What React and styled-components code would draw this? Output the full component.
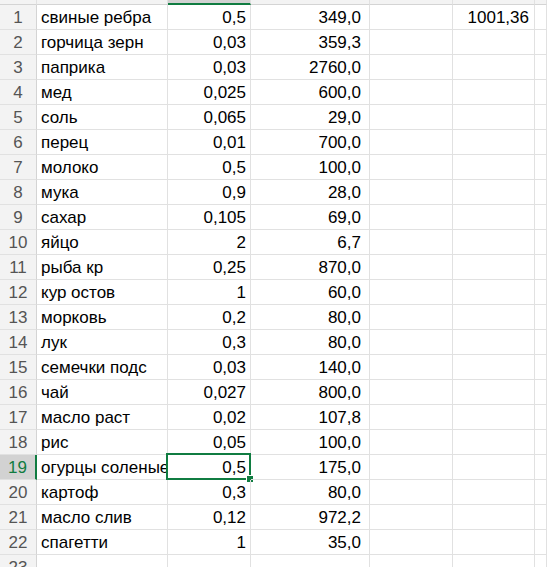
import React from "react";
import styled, { createGlobalStyle } from "styled-components";

const GREEN = "#107c41";
const LINE = "#e1e1e1";

const GlobalStyle = createGlobalStyle`
  html, body {
    margin: 0;
    padding: 0;
    background: #ffffff;
    overflow: hidden;
  }
  body {
    font-family: "Liberation Sans", Arial, sans-serif;
  }
`;

const Sheet = styled.div`
  width: 547px;
  height: 567px;
  overflow: hidden;
  display: grid;
  grid-template-columns: 37px 131px 83px 119px 83px 82px 1fr;
  grid-auto-rows: 25px;
  grid-template-rows: 5px;
`;

const ColHead = styled.div`
  box-sizing: border-box;
  background: ${({ $active }) => ($active ? "#d2d2d2" : "#f3f3f3")};
  border-right: 1px solid ${LINE};
  border-bottom: ${({ $active }) => ($active ? `2px solid ${GREEN}` : "1px solid #d4d4d4")};
`;

const RowHead = styled.div`
  box-sizing: border-box;
  display: flex;
  align-items: center;
  justify-content: center;
  background: ${({ $active }) => ($active ? "#d2d2d2" : "#f3f3f3")};
  color: ${({ $active }) => ($active ? GREEN : "#555555")};
  border-bottom: 1px solid ${LINE};
  border-right: ${({ $active }) => ($active ? `2px solid ${GREEN}` : "1px solid #d4d4d4")};
  font-size: 17px;
  padding-top: 1px;
`;

const Cell = styled.div`
  position: relative;
  box-sizing: border-box;
  display: flex;
  align-items: center;
  justify-content: ${({ $num }) => ($num ? "flex-end" : "flex-start")};
  padding: 1px ${({ $pr }) => $pr || 4}px 0 4px;
  border-right: 1px solid ${LINE};
  border-bottom: 1px solid ${LINE};
  font-size: 17px;
  color: #000000;
  white-space: nowrap;
  overflow: ${({ $selected }) => ($selected ? "visible" : "hidden")};
`;

const Selection = styled.div`
  position: absolute;
  top: -2px;
  left: -2px;
  right: -1px;
  bottom: -1px;
  border: 2px solid ${GREEN};
  pointer-events: none;
`;

const FillHandle = styled.div`
  position: absolute;
  right: -5px;
  bottom: -5px;
  width: 6px;
  height: 6px;
  background: ${GREEN};
  border: 1px solid #ffffff;
`;

const rows = [
  ["свиные ребра", "0,5", "349,0", "", "1001,36"],
  ["горчица зерн", "0,03", "359,3"],
  ["паприка", "0,03", "2760,0"],
  ["мед", "0,025", "600,0"],
  ["соль", "0,065", "29,0"],
  ["перец", "0,01", "700,0"],
  ["молоко", "0,5", "100,0"],
  ["мука", "0,9", "28,0"],
  ["сахар", "0,105", "69,0"],
  ["яйцо", "2", "6,7"],
  ["рыба кр", "0,25", "870,0"],
  ["кур остов", "1", "60,0"],
  ["морковь", "0,2", "80,0"],
  ["лук", "0,3", "80,0"],
  ["семечки подс", "0,03", "140,0"],
  ["чай", "0,027", "800,0"],
  ["масло раст", "0,02", "107,8"],
  ["рис", "0,05", "100,0"],
  ["огурцы соленые", "0,5", "175,0"],
  ["картоф", "0,3", "80,0"],
  ["масло слив", "0,12", "972,2"],
  ["спагетти", "1", "35,0"],
  [],
];

const SEL_ROW = 18;

export default function App() {
  return (
    <>
      <GlobalStyle />
      <Sheet>
        <ColHead />
        <ColHead />
        <ColHead $active />
        <ColHead />
        <ColHead />
        <ColHead />
        <ColHead />
        {rows.map((r, i) => {
          const sel = i === SEL_ROW;
          return (
            <React.Fragment key={i}>
              <RowHead $active={sel}>{i + 1}</RowHead>
              <Cell>{r[0] || ""}</Cell>
              <Cell $num $selected={sel}>
                {r[1] || ""}
                {sel && (
                  <Selection>
                    <FillHandle />
                  </Selection>
                )}
              </Cell>
              <Cell $num $pr={8}>{r[2] || ""}</Cell>
              <Cell $num>{r[3] || ""}</Cell>
              <Cell $num $pr={5}>{r[4] || ""}</Cell>
              <Cell />
            </React.Fragment>
          );
        })}
      </Sheet>
    </>
  );
}
